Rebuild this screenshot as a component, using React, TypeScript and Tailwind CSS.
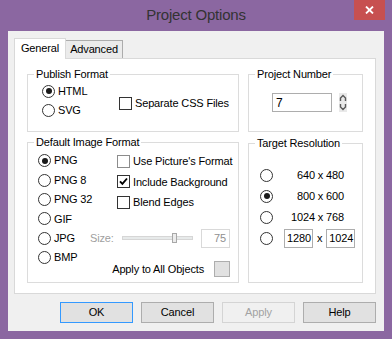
import React from "react";

const FONT = { fontFamily: '"Liberation Sans", Arial, sans-serif' };

function Radio({ checked }: { checked?: boolean }) {
  return (
    <span className="flex h-[13px] w-[13px] shrink-0 items-center justify-center rounded-full border border-[#333333] bg-white">
      {checked && <span className="h-[6px] w-[6px] rounded-full bg-[#1a1a1a]" />}
    </span>
  );
}

function Check({ checked, dim }: { checked?: boolean; dim?: boolean }) {
  return (
    <span
      className={
        dim
          ? "flex h-[13px] w-[13px] shrink-0 items-center justify-center border border-[#8c8c8c] bg-white"
          : "flex h-[13px] w-[13px] shrink-0 items-center justify-center border border-[#333333] bg-white"
      }
    >
      {checked && (
        <svg width="9" height="9" viewBox="0 0 9 9">
          <path d="M1 4.3 L3.4 6.8 L8 1.5" stroke="#000" strokeWidth="1.9" fill="none" />
        </svg>
      )}
    </span>
  );
}

function Group({
  title,
  className,
  children,
}: {
  title: string;
  className: string;
  children: React.ReactNode;
}) {
  return (
    <fieldset className={className}>
      <legend className="ml-[6px] px-[2px] text-[11px] leading-[14px] text-black">{title}</legend>
      {children}
    </fieldset>
  );
}

function Btn({ label, variant }: { label: string; variant: "default" | "normal" | "disabled" }) {
  const cls =
    variant === "default"
      ? "h-[21px] w-[73px] border border-[#3399ff] bg-[#e1e1e1] text-[11px] text-black"
      : variant === "disabled"
      ? "h-[21px] w-[73px] border border-[#d4d4d4] bg-[#f0f0f0] text-[11px] text-[#a2a2a2]"
      : "h-[21px] w-[73px] border border-[#adadad] bg-[#e1e1e1] text-[11px] text-black";
  return <div className={"flex items-center justify-center " + cls}>{label}</div>;
}

export default function App() {
  return (
    <div
      style={FONT}
      className="flex h-[339px] w-[392px] flex-col bg-[#8b67a1] text-[11px] tracking-[-0.15px] text-black"
    >
      {/* Title bar */}
      <div className="grid h-[31px] grid-cols-[1fr_auto_1fr] items-center">
        <div />
        <div className="text-[15px] tracking-[-0.2px] text-[#333333]">Project Options</div>
        <div className="flex h-full items-start justify-end pr-[7px]">
          <div className="flex h-[20px] w-[31px] items-center justify-center bg-[#c75050]">
            <svg width="9" height="8" viewBox="0 0 9 8">
              <path d="M1 0.5 L8 7.5 M8 0.5 L1 7.5" stroke="#fff" strokeWidth="1.8" />
            </svg>
          </div>
        </div>
      </div>

      {/* Client area */}
      <div className="mx-[8px] flex h-[300px] flex-col bg-[#f0f0f0] pl-[6px] pr-[8px] pt-[7px]">
        {/* Tabs */}
        <div className="flex h-[20px] items-end">
          <div className="relative z-10 -mb-[1px] flex h-[21px] w-[52px] items-center justify-center border border-b-0 border-[#d9d9d9] bg-white pb-[2px]">
            General
          </div>
          <div className="flex h-[18px] w-[57px] items-center justify-center border border-b-0 border-l-0 border-[#acacac] bg-[#ebebeb]">
            Advanced
          </div>
        </div>

        {/* Panel */}
        <div className="flex h-[236px] w-[362px] gap-[9px] border border-[#d9d9d9] bg-white pl-[12px] pt-[8px]">
          {/* Left column */}
          <div className="flex w-[212px] flex-col gap-[3px]">
            <Group title="Publish Format" className="h-[65px] border border-[#dcdcdc]">
              <div className="flex pl-[14px] pt-[0.5px]">
                <div className="flex w-[77px] flex-col">
                  <div className="flex h-[19px] items-center gap-[3px]">
                    <Radio checked />
                    <span>HTML</span>
                  </div>
                  <div className="flex h-[19px] items-center gap-[3px]">
                    <Radio />
                    <span>SVG</span>
                  </div>
                </div>
                <div className="mt-[12.5px] flex h-[19px] items-center gap-[3px]">
                  <Check />
                  <span>Separate CSS Files</span>
                </div>
              </div>
            </Group>

            <Group title="Default Image Format" className="h-[148px] border border-[#dcdcdc]">
              <div className="flex flex-col pl-[10px] pt-[2px]">
                <div className="flex">
                  <div className="flex w-[79px] flex-col">
                    {["PNG", "PNG 8", "PNG 32", "GIF"].map((t, i) => (
                      <div key={t} className="flex h-[19.4px] items-center gap-[3px]">
                        <Radio checked={i === 0} />
                        <span>{t}</span>
                      </div>
                    ))}
                  </div>
                  <div className="flex flex-col">
                    <div className="flex h-[20.5px] items-center gap-[3px]">
                      <Check dim />
                      <span>Use Picture's Format</span>
                    </div>
                    <div className="flex h-[20.5px] items-center gap-[3px]">
                      <Check checked />
                      <span>Include Background</span>
                    </div>
                    <div className="flex h-[20.5px] items-center gap-[3px]">
                      <Check />
                      <span>Blend Edges</span>
                    </div>
                  </div>
                </div>

                <div className="flex h-[19.4px] items-center">
                  <div className="flex w-[52px] items-center gap-[3px]">
                    <Radio />
                    <span>JPG</span>
                  </div>
                  <span className="w-[32px] text-[#a0a0a0]">Size:</span>
                  <div className="relative h-[4px] w-[71px] border border-[#d6d6d6] bg-[#e7eaea]">
                    <div className="absolute left-[49px] top-[-4px] h-[10px] w-[5px] border border-[#a8a8a8] bg-[#ececec]" />
                  </div>
                  <div className="ml-[8px] flex h-[19px] w-[29px] items-center justify-end border border-[#d9d9d9] bg-white pr-[3px] text-[#8f8f8f]">
                    75
                  </div>
                </div>

                <div className="flex items-start justify-between pr-[8px]">
                  <div className="flex h-[19.4px] items-center gap-[3px]">
                    <Radio />
                    <span>BMP</span>
                  </div>
                  <div className="mt-[13px] flex items-center gap-[10px]">
                    <span>Apply to All Objects</span>
                    <span className="h-[16px] w-[16px] border border-[#adadad] bg-[#e1e1e1]" />
                  </div>
                </div>
              </div>
            </Group>
          </div>

          {/* Right column */}
          <div className="flex w-[115px] flex-col gap-[4px]">
            <Group title="Project Number" className="h-[65px] border border-[#dcdcdc]">
              <div className="flex items-center pl-[23px] pt-[12px]">
                <div className="flex h-[19px] w-[60px] items-center border border-[#adadad] bg-white pl-[3px] text-[12px]">
                  7
                </div>
                <div className="ml-[7px] h-[19px] w-[8px] bg-[#e9e9e9]">
                  <svg width="8" height="19" viewBox="0 0 8 19">
                    <path d="M1.5 8 L1.5 5 L4 2.5 L6.5 5 L6.5 8" stroke="#5a5a5a" strokeWidth="1.4" fill="none" />
                    <path d="M1.5 11 L1.5 14 L4 16.5 L6.5 14 L6.5 11" stroke="#5a5a5a" strokeWidth="1.4" fill="none" />
                  </svg>
                </div>
              </div>
            </Group>

            <Group title="Target Resolution" className="h-[147px] border border-[#dcdcdc]">
              <div className="flex flex-col pl-[11px] pt-[14.5px]">
                {["640 x 480", "800 x 600", "1024 x 768"].map((t, i) => (
                  <div key={t} className="flex h-[21px] items-center">
                    <Radio checked={i === 1} />
                    <span className="flex-1 pr-[18px] text-right">{t}</span>
                  </div>
                ))}
                <div className="flex h-[21px] items-center">
                  <Radio />
                  <div className="ml-[11px] flex items-center gap-[4px]">
                    <div className="flex h-[19px] w-[29px] items-center border border-[#adadad] bg-white pl-[2px]">
                      1280
                    </div>
                    <span>x</span>
                    <div className="flex h-[19px] w-[29px] items-center border border-[#adadad] bg-white pl-[2px]">
                      1024
                    </div>
                  </div>
                </div>
              </div>
            </Group>
          </div>
        </div>

        {/* Buttons */}
        <div className="mt-[8px] flex justify-end gap-[8px]">
          <Btn label="OK" variant="default" />
          <Btn label="Cancel" variant="normal" />
          <Btn label="Apply" variant="disabled" />
          <Btn label="Help" variant="normal" />
        </div>
      </div>
    </div>
  );
}
